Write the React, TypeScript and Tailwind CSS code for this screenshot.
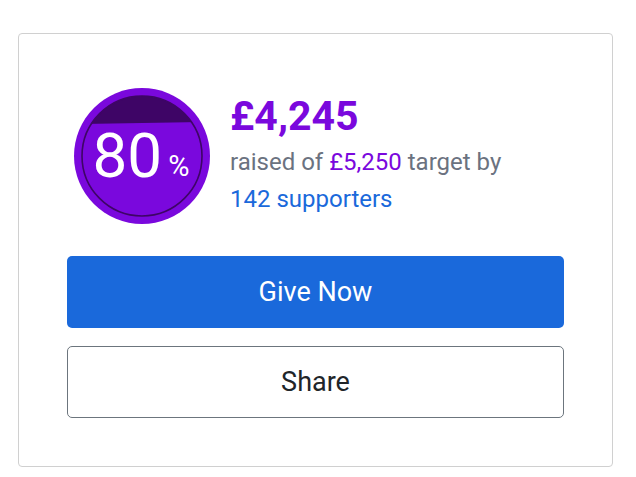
import React from 'react';

const Gauge: React.FC<{ percent: number }> = ({ percent }) => {
  // level of the fill inside the inner circle (r = 60, centre 68,68)
  const top = 8 + 120 * (1 - percent / 100) + 3;
  return (
    <div className="relative w-[136px] h-[136px] shrink-0">
      <svg width="136" height="136" viewBox="0 0 136 136" className="absolute inset-0">
        <defs>
          <clipPath id="inner">
            <circle cx="68" cy="68" r="60" />
          </clipPath>
        </defs>
        <circle cx="68" cy="68" r="68" fill="#7a08dd" />
        <g clipPath="url(#inner)">
          <rect x="0" y="0" width="136" height="136" fill="#7a08dd" />
          <path d={`M0 0 H136 V${top - 1} L0 ${top + 1} Z`} fill="#3e0566" />
        </g>
        <circle cx="68" cy="68" r="60" fill="none" stroke="#3e0566" strokeWidth="1.6" />
      </svg>
      <div className="absolute inset-0 flex items-center justify-center pr-[2px]">
        <span className="text-white text-[62px] leading-none">80</span>
        <span className="text-white text-[29px] leading-none mt-[20px] ml-[6px]">%</span>
      </div>
    </div>
  );
};

const App: React.FC = () => {
  return (
    <div className="w-[636px] h-[477px] bg-white pt-[33px] pl-[18px]" style={{ fontFamily: 'Roboto, "Liberation Sans", sans-serif' }}>
      <div className="w-[595px] h-[434px] border border-[#d0d0d0] rounded-[4px] px-[48px] pt-[54px]">
        {/* Progress summary */}
        <div className="flex items-start ml-[7px]">
          <Gauge percent={80} />
          <div className="ml-[20px] mt-[4px]">
            <div className="text-[41px] leading-[48px] font-bold text-[#7a08dd]">£4,245</div>
            <div className="text-[24px] leading-[37px] text-[#6b7280] mt-[4px]">
              raised of <span className="text-[#7a08dd]">£5,250</span> target by
            </div>
            <div className="text-[24px] leading-[37px] text-[#1a69db]">142 supporters</div>
          </div>
        </div>

        {/* Actions */}
        <div className="mt-[32px] flex flex-col gap-[18px]">
          <button className="w-full h-[72px] rounded-[5px] bg-[#1a69db] text-white text-[27px]">
            Give Now
          </button>
          <button className="w-full h-[72px] rounded-[5px] border border-[#6c757d] bg-white text-[#212529] text-[27px]">
            Share
          </button>
        </div>
      </div>
    </div>
  );
};

export default App;
